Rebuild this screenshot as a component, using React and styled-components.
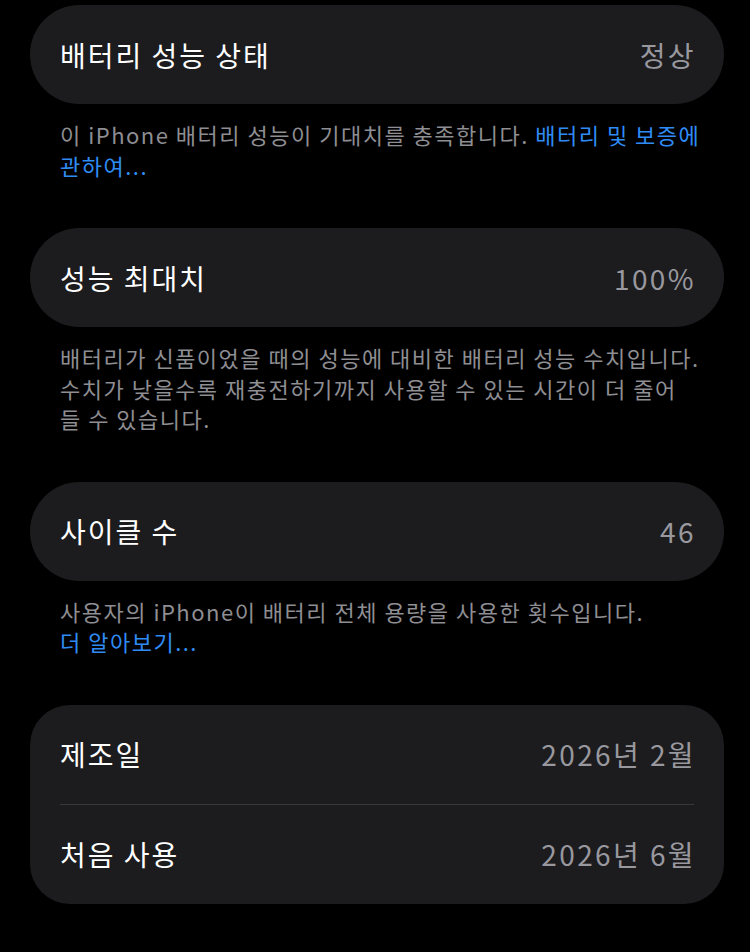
import styled, { createGlobalStyle } from "styled-components";

const GlobalStyle = createGlobalStyle`
  html, body {
    margin: 0;
    padding: 0;
    background: #000;
  }
  body {
    font-family: "Noto Sans CJK KR", "Noto Sans", sans-serif;
    -webkit-font-smoothing: antialiased;
  }
`;

const Page = styled.main`
  width: 750px;
  min-height: 952px;
  background: #000;
  padding: 5px 26px 0 30px;
  box-sizing: border-box;
  display: flex;
  flex-direction: column;
`;

const Group = styled.section`
  display: flex;
  flex-direction: column;
  margin-bottom: 48px;
`;

const Card = styled.div`
  background: #1c1c1e;
  border-radius: ${({ $rounded }) => ($rounded ? "40px" : "50px")};
  display: flex;
  flex-direction: column;
`;

const Row = styled.div`
  height: 99px;
  display: flex;
  align-items: center;
  justify-content: space-between;
  padding: 0 28px 0 30px;
  font-size: 28px;
  letter-spacing: 2px;
`;

const Label = styled.span`
  color: #fff;
`;

const Value = styled.span`
  color: #98989e;
  letter-spacing: 2.4px;
`;

const Divider = styled.hr`
  border: none;
  height: 1px;
  background: #38383b;
  margin: 0 30px;
`;

const Footer = styled.p`
  margin: 0;
  padding: 15px 20px 0 30px;
  font-size: 22px;
  line-height: 30.5px;
  color: #8e8e93;
  white-space: nowrap;
  letter-spacing: 1.5px;
`;

const Link = styled.span`
  color: #2f8cf5;
`;

const App = () => {
  return (
    <>
      <GlobalStyle />
      <Page>
        <Group>
          <Card>
            <Row>
              <Label>배터리 성능 상태</Label>
              <Value>정상</Value>
            </Row>
          </Card>
          <Footer>
            이 iPhone 배터리 성능이 기대치를 충족합니다. <Link>배터리 및 보증에</Link>
            <br />
            <Link>관하여...</Link>
          </Footer>
        </Group>

        <Group>
          <Card>
            <Row>
              <Label>성능 최대치</Label>
              <Value>100%</Value>
            </Row>
          </Card>
          <Footer>
            배터리가 신품이었을 때의 성능에 대비한 배터리 성능 수치입니다.
            <br />
            수치가 낮을수록 재충전하기까지 사용할 수 있는 시간이 더 줄어
            <br />
            들 수 있습니다.
          </Footer>
        </Group>

        <Group>
          <Card>
            <Row>
              <Label>사이클 수</Label>
              <Value>46</Value>
            </Row>
          </Card>
          <Footer>
            사용자의 iPhone이 배터리 전체 용량을 사용한 횟수입니다.
            <br />
            <Link>더 알아보기...</Link>
          </Footer>
        </Group>

        <Group>
          <Card $rounded>
            <Row>
              <Label>제조일</Label>
              <Value>2026년 2월</Value>
            </Row>
            <Divider />
            <Row>
              <Label>처음 사용</Label>
              <Value>2026년 6월</Value>
            </Row>
          </Card>
        </Group>
      </Page>
    </>
  );
};

export default App;
